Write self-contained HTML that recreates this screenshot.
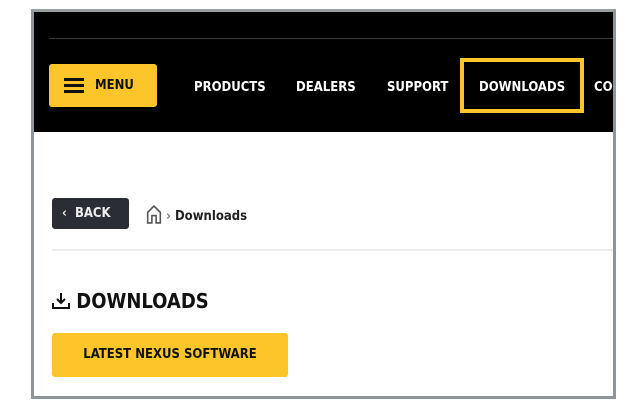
<!DOCTYPE html>
<html><head><style>
*{margin:0;padding:0;box-sizing:border-box}
body{width:632px;height:410px;background:#fff;position:relative;overflow:hidden;font-family:"DejaVu Sans Condensed","Liberation Sans",sans-serif}
.frame{position:absolute;left:31px;top:9px;width:585px;height:390px;border:3px solid #8e969b;border-top-color:#9aa1a5;overflow:hidden;background:#fff}
.hdr{position:absolute;left:0;top:0;width:100%;height:120px;background:#000}
.line{position:absolute;left:15px;right:0;top:26px;height:1px;background:#3a3a3a}
.menu{position:absolute;left:15px;top:52px;width:108px;height:43px;background:#fcc62b;border-radius:3px;color:#111;font-weight:bold;font-size:13px}
.menu .bars{position:absolute;left:15px;top:14px;width:20px;height:15px;border-top:3px solid #111;border-bottom:3px solid #111}
.menu .bars:after{content:"";position:absolute;left:0;right:0;top:3px;height:3px;background:#111}
.menu span{position:absolute;left:46px;top:14px}
.nav{position:absolute;top:68px;color:#fff;font-weight:bold;font-size:13px}
.box{position:absolute;left:426px;top:46px;width:124px;height:55px;border:4px solid #fcc62b}
.back{position:absolute;left:18px;top:186px;width:77px;height:31px;background:#2a2d33;border-radius:3px;color:#eee;font-weight:bold;font-size:13px;padding:8px 0 0 10px}
.crumb{position:absolute;left:112px;top:193px;font-size:13px;font-weight:bold;color:#222}
.div{position:absolute;left:18px;right:0;top:237px;height:2px;background:#ececec}
.h{position:absolute;left:18px;top:277px;font-size:20px;font-weight:bold;color:#111}
.btn{position:absolute;left:18px;top:321px;width:236px;height:44px;background:#fcc62b;border-radius:3px;font-weight:bold;font-size:13px;color:#111;text-align:center;line-height:44px}
</style></head><body>
<div class="frame">
<div class="hdr">
<div class="line"></div>
<div class="menu"><div class="bars"></div><span>MENU</span></div>
<div class="nav" style="left:160px">PRODUCTS</div>
<div class="nav" style="left:262px">DEALERS</div>
<div class="nav" style="left:353px">SUPPORT</div>
<div class="box"></div>
<div class="nav" style="left:445px">DOWNLOADS</div>
<div class="nav" style="left:560px">CON</div>
</div>
<div class="back">‹&nbsp; BACK</div>
<div class="crumb"><svg width="16" height="19" viewBox="0 0 14 18" style="vertical-align:-4px"><path d="M1 17V7L7 1l6 6v10H9v-7H5v7z" fill="none" stroke="#555" stroke-width="1.5"/></svg>&nbsp;<span style="color:#777">›</span> Downloads</div>
<div class="div"></div>
<div class="h"><svg width="18" height="18" viewBox="0 0 18 18" style="vertical-align:-2px"><path d="M9 1v10M5 7l4 4 4-4M1 11v5h16v-5" fill="none" stroke="#111" stroke-width="2"/></svg> DOWNLOADS</div>
<div class="btn">LATEST NEXUS SOFTWARE</div>
</div>
</body></html>
